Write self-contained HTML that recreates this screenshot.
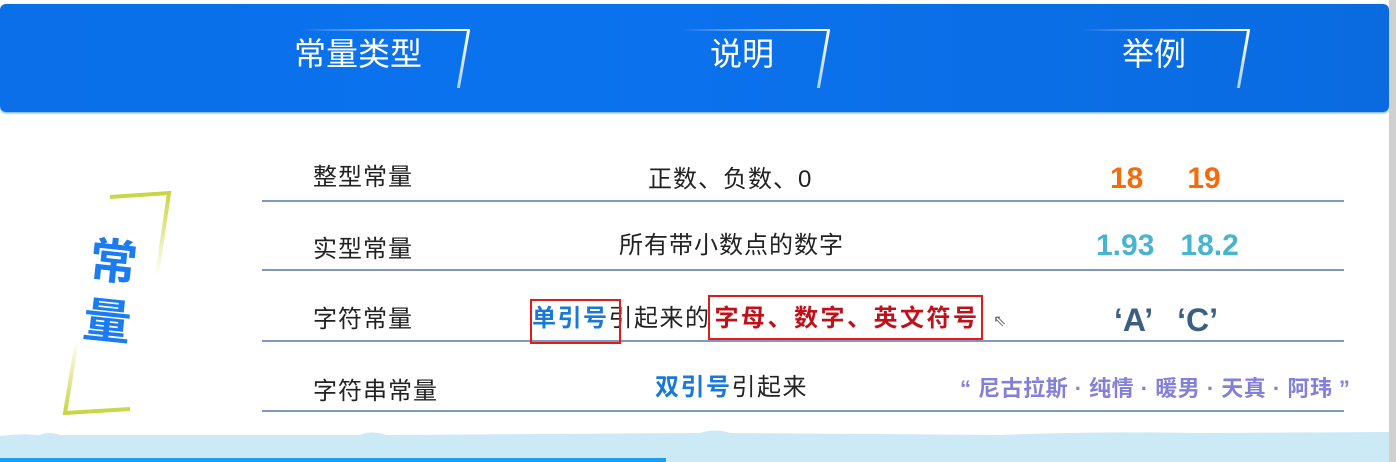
<!DOCTYPE html>
<html><head><meta charset="utf-8"><style>
*{margin:0;padding:0;box-sizing:border-box}
body{width:1396px;height:462px;overflow:hidden;background:#fff;position:relative;font-family:"Liberation Sans","Noto Sans CJK SC",sans-serif}
.a{position:absolute;white-space:nowrap;line-height:1}
.hdr{position:absolute;left:0;top:4px;width:1389px;height:108px;border-radius:6px;background:linear-gradient(90deg,#0a6fe8,#0b72ee 40%,#0a6be0);box-shadow:0 1px 2px #5aa0ff}
.h{color:#fff;font-size:32px;top:38px}
.sl{position:absolute;width:3px;height:58px;top:30px;background:linear-gradient(#fff,#a9cfff);transform:skewX(-10deg)}
.tp{position:absolute;height:2px;top:29px;background:linear-gradient(90deg,rgba(255,255,255,0),#fff)}
.line{position:absolute;left:262px;width:1082px;height:2px;background:#7e98c4}
.t{font-size:24px;color:#222;letter-spacing:1px}
.b{font-weight:bold}
.box{position:absolute;border:2px solid #e21a1a}
</style></head><body>
<div class="hdr"></div>
<div class="tp" style="left:300px;width:170px"></div><div class="sl" style="left:462px"></div>
<div class="tp" style="left:680px;width:150px"></div><div class="sl" style="left:822px"></div>
<div class="tp" style="left:1080px;width:170px"></div><div class="sl" style="left:1242px"></div>
<div class="a h" style="left:294px">常量类型</div>
<div class="a h" style="left:710px">说明</div>
<div class="a h" style="left:1122px">举例</div>

<div style="position:absolute;left:1389px;top:0;width:7px;height:462px;background:#d0d0d0"></div>

<div class="line" style="top:200px"></div>
<div class="line" style="top:269px"></div>
<div class="line" style="top:340px"></div>
<div class="line" style="top:410px"></div>

<div class="a t" style="left:313px;top:166px">整型常量</div>
<div class="a t" style="left:313px;top:238px">实型常量</div>
<div class="a t" style="left:313px;top:308px">字符常量</div>
<div class="a t" style="left:313px;top:380px">字符串常量</div>

<div class="a t" style="left:648px;top:168px">正数、负数、0</div>
<div class="a t" style="left:619px;top:234px">所有带小数点的数字</div>
<div class="a t" style="left:532px;top:307px;letter-spacing:1.5px"><span class="b" style="color:#1a78d8">单引号</span>引起来的<span class="b" style="color:#c0101a;letter-spacing:2.5px;margin-left:4px">字母、数字、英文符号</span></div>
<div class="box" style="left:530px;top:299px;width:91px;height:45px"></div>
<div class="box" style="left:708px;top:295px;width:275px;height:45px"></div>
<div class="a t" style="left:655px;top:376px;letter-spacing:1.5px"><span class="b" style="color:#1a78d8">双引号</span>引起来</div>
<div class="a" style="left:993px;top:314px;font-size:16px;color:#666">⇖</div>

<div class="a b" style="left:1110px;top:164px;font-size:30px;color:#f26b0c">18<span style="margin-left:44px">19</span></div>
<div class="a b" style="left:1096px;top:231px;font-size:30px;color:#47b5cf">1.93<span style="margin-left:26px">18.2</span></div>
<div class="a b" style="left:1114px;top:304px;font-size:32px;color:#3a5f82">‘A’<span style="margin-left:24px">‘C’</span></div>
<div class="a b" style="left:960px;top:378px;font-size:22px;color:#8480d8;letter-spacing:0.5px">“ 尼古拉斯 · 纯情 · 暖男 · 天真 · 阿玮 ”</div>

<svg class="a" style="left:55px;top:185px" width="130" height="235" viewBox="0 0 130 235">
<defs><linearGradient id="g1" x1="0" y1="0" x2="0" y2="1"><stop offset="0" stop-color="#c8d642"/><stop offset="1" stop-color="#c8d642" stop-opacity="0"/></linearGradient>
<linearGradient id="g2" x1="0" y1="1" x2="0" y2="0"><stop offset="0" stop-color="#c8d642"/><stop offset="1" stop-color="#c8d642" stop-opacity="0"/></linearGradient></defs>
<path d="M55 12 L114 8 L102 90" fill="none" stroke="url(#g1)" stroke-width="4"/>
<path d="M22 155 L10 228 L75 224" fill="none" stroke="url(#g2)" stroke-width="4"/>
</svg>
<div class="a b" style="left:86px;top:234px;font-size:48px;line-height:60px;color:#1a7cf0;transform:rotate(6deg);width:60px">常<br>量</div>

<svg class="a" style="left:0;top:420px" width="1389" height="42" viewBox="0 0 1389 42">
<path d="M0 16 Q20 13 40 15 Q48 11 60 15 L360 15 Q372 10 386 15 L700 13 Q715 8 730 13 L1000 15 Q1100 11 1200 13 L1389 12 L1389 42 L0 42Z" fill="#cbeaf6"/>
<rect x="0" y="38" width="666" height="4" fill="#18a0f0"/>
</svg>
</body></html>
